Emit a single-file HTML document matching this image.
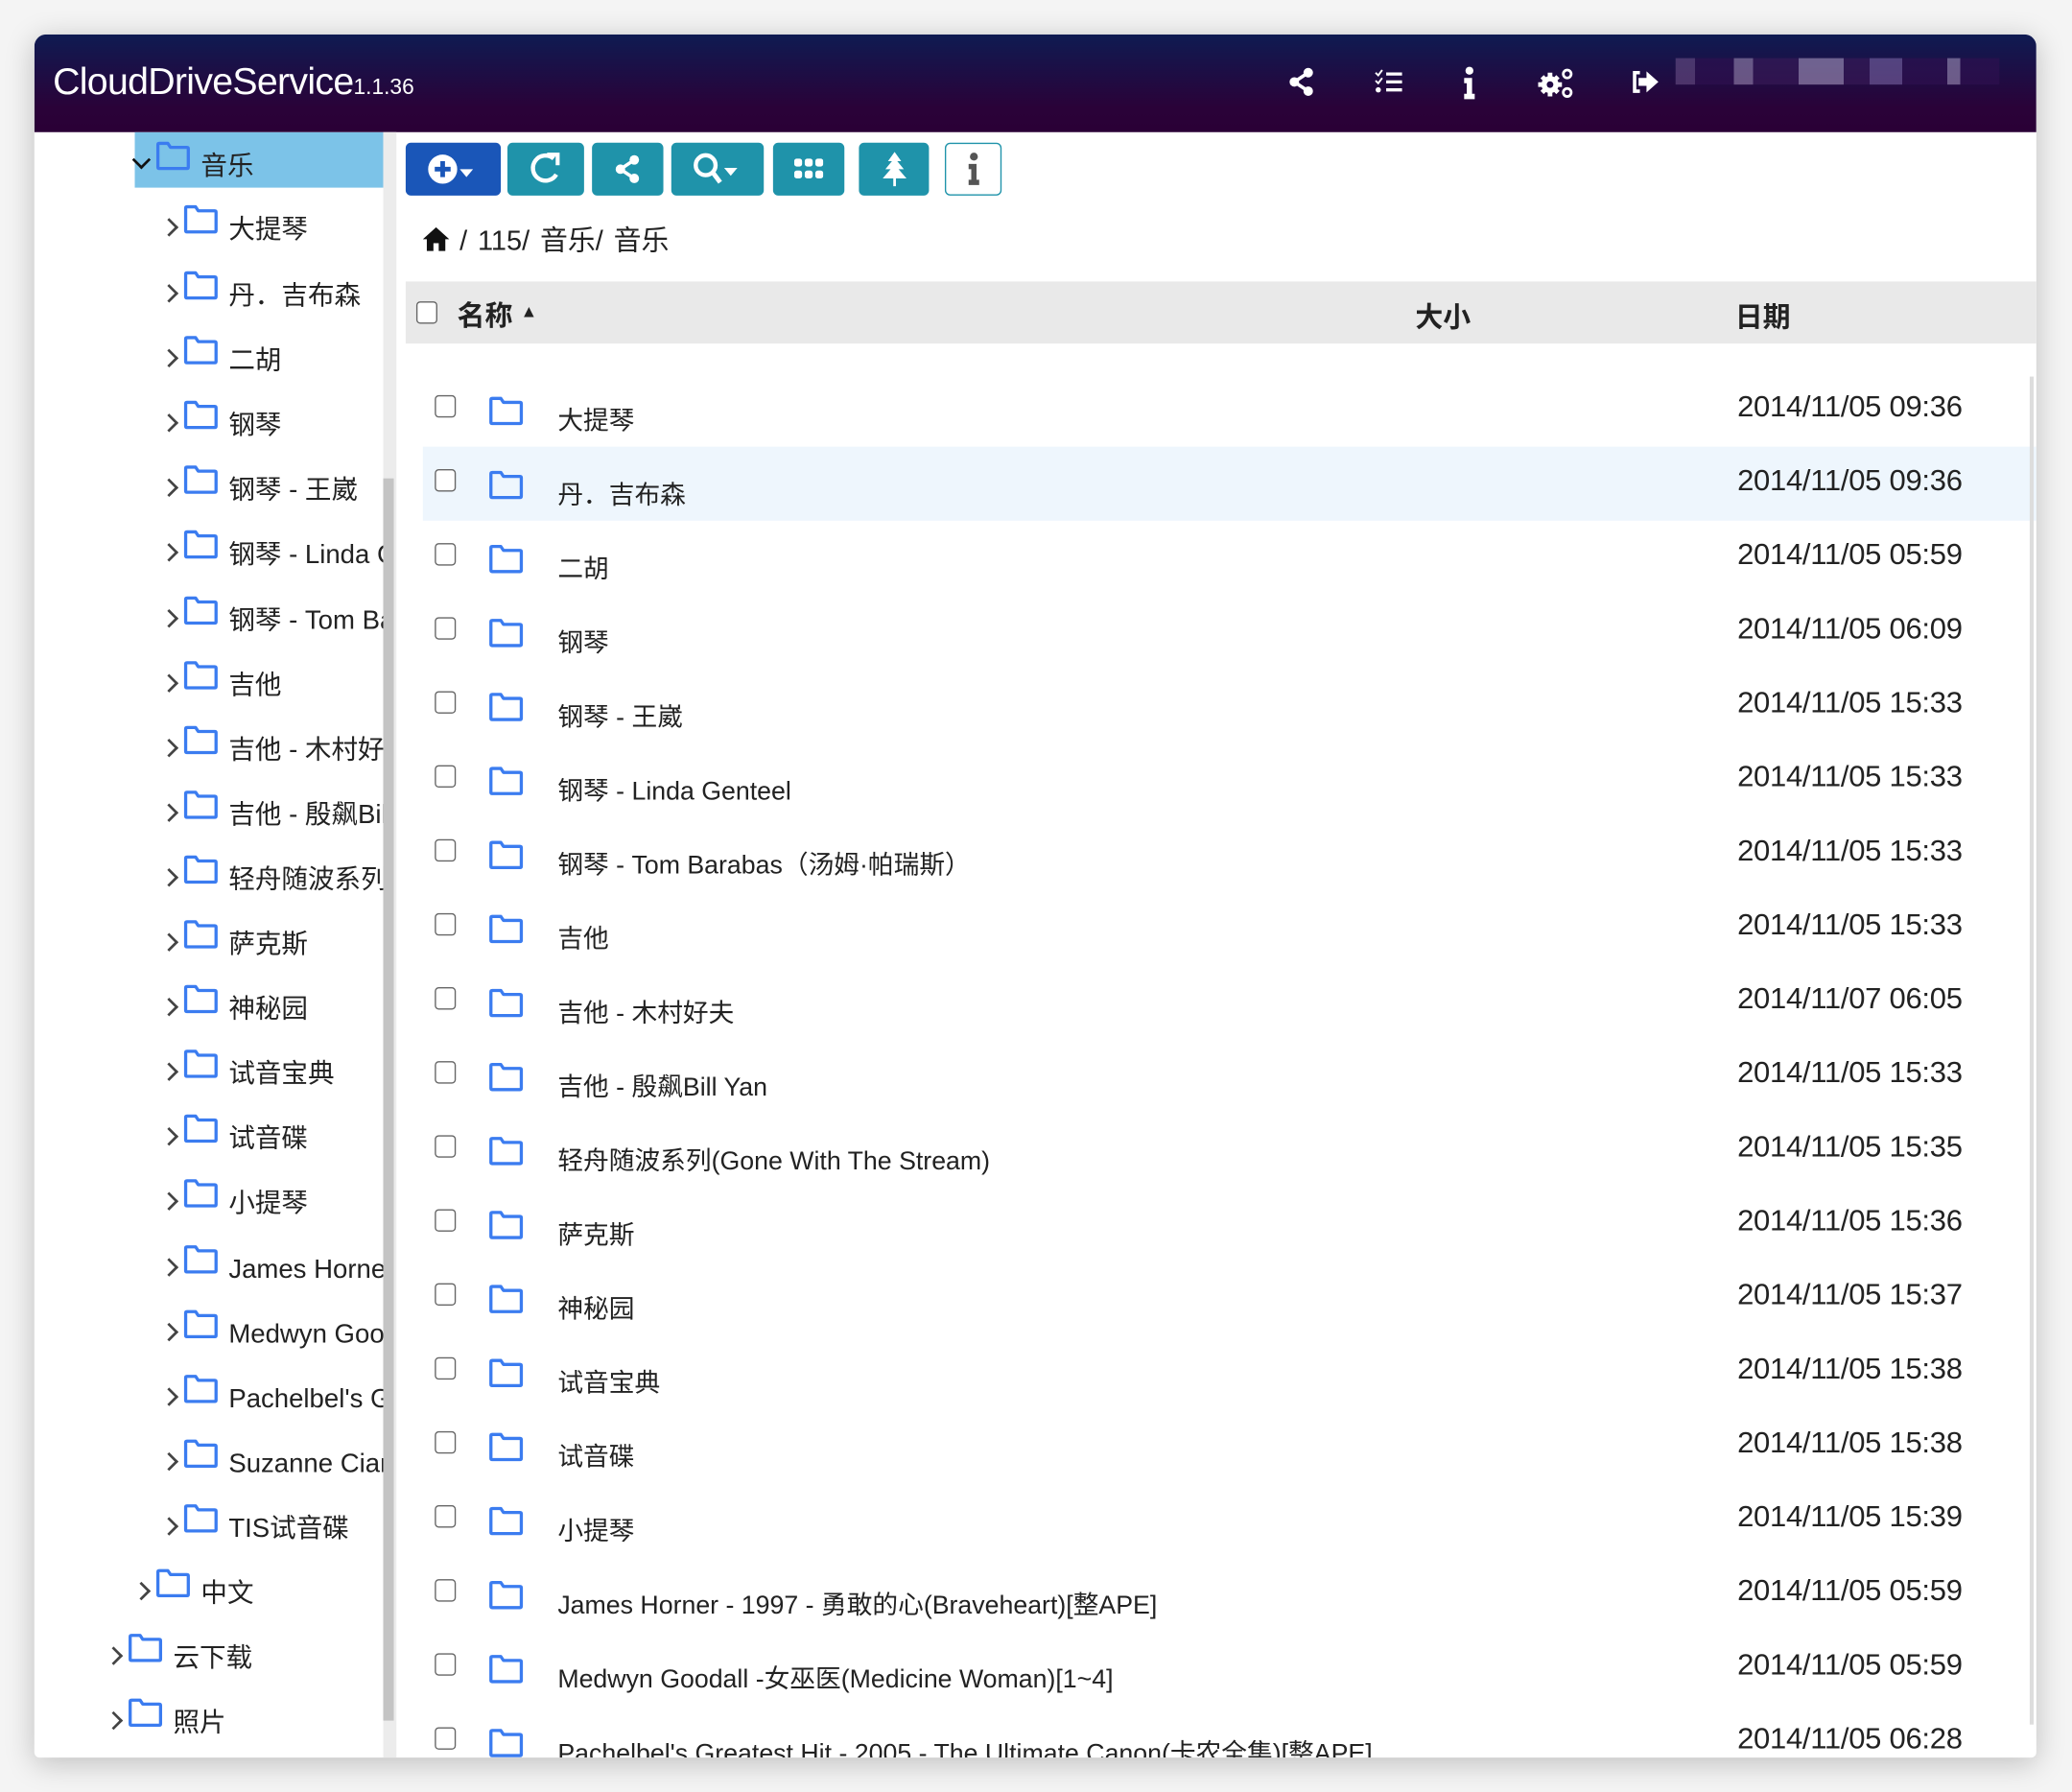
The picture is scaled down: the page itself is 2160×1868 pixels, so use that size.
<!DOCTYPE html>
<html><head><meta charset="utf-8"><style>
html,body{margin:0;padding:0;width:2160px;height:1868px;overflow:hidden;background:#f4f4f4}
#stage{position:absolute;left:0;top:0;width:1568px;height:1356px;transform:scale(1.377551);transform-origin:0 0;font-family:"Liberation Sans","Noto Sans CJK SC",sans-serif;color:#222}
.win{position:absolute;left:26px;top:26px;width:1515px;height:1304px;background:#fff;border-radius:9px 9px 4px 4px;box-shadow:0 4px 22px rgba(0,0,0,.22);overflow:hidden}
.hdr{position:absolute;left:0;top:0;width:1515px;height:74px;background:linear-gradient(#0f1b52,#2a0238 75%,#2a0036)}
.title{position:absolute;left:14px;top:20px;color:#fff;font-size:28.5px;letter-spacing:-0.5px}
.title small{font-size:16.5px;letter-spacing:0}
.hi{position:absolute;top:24px}
.blur{position:absolute;left:1242px;top:18px;width:245px;height:20px;background:linear-gradient(90deg,#6a4f86 0 6%,#2f1050 6% 18%,#9a86b0 18% 24%,#3a1a58 24% 38%,#a898c0 38% 52%,#3a1a58 52% 60%,#7a64a4 60% 70%,#2f1050 70% 84%,#a090b8 84% 88%,#2f1050 88%);opacity:.6}
.side{position:absolute;left:0;top:74px;width:264px;height:1230px;overflow:hidden}
.sb{position:absolute;left:264px;top:74px;width:10px;height:1230px;background:#ececec}
.sbt{position:absolute;left:264px;top:336px;width:8px;height:940px;background:#c4c4c4}
.ti{position:absolute;height:40px;line-height:40px;font-size:20px;white-space:nowrap}
.ti .ch{display:inline-block;width:8px;height:8px;border-right:2px solid #444;border-bottom:2px solid #444;transform:rotate(-45deg);margin-right:6px;vertical-align:middle;position:relative;top:-3px}
.ti .fd{display:inline-block;vertical-align:middle;position:relative;top:-4px;margin-right:8px}
.sel{position:absolute;left:76px;top:0;width:188px;height:42px;background:#7cc3e8}
.main{position:absolute;left:274px;top:74px;width:1241px;height:1230px;overflow:hidden}
.btn{position:absolute;top:8px;height:40px;border-radius:4px;background:#1f93aa;display:flex;align-items:center;justify-content:center}
.bc{position:absolute;left:20px;top:66px;font-size:21px;word-spacing:2px}
.th{position:absolute;left:7px;top:113px;width:1234px;height:47px;background:#e9e9e9;font-size:21px;font-weight:bold}
.cb{position:absolute;width:14px;height:15px;border:1.5px solid #666;border-radius:3px;background:#fff}
.row{position:absolute;left:20px;width:1221px;height:56px}
.row .nm{position:absolute;left:102px;top:20px;font-size:19.4px;white-space:nowrap}
.row .dt{position:absolute;right:56px;top:13px;font-size:22.5px;letter-spacing:-0.2px}
.row .fi{position:absolute;left:50px;top:18px}
.row .cb{left:9px;top:17px}
.vs{position:absolute;left:1236px;top:185px;width:3px;height:1020px;background:#ddd}
</style></head><body><div id="stage">
<div class="win">
<div class="hdr">
<div class="title">CloudDriveService<small>1.1.36</small></div>
<svg class="hi" style="left:949px" width="20" height="24" viewBox="0 0 20 24"><g fill="#fff"><circle cx="15" cy="5" r="3.6"/><circle cx="4.5" cy="12" r="3.6"/><circle cx="15" cy="19" r="3.6"/></g><path d="M15 5L4.5 12L15 19" stroke="#fff" stroke-width="2.6" fill="none"/></svg>
<svg class="hi" style="left:1014px" width="22" height="24" viewBox="0 0 22 24"><g stroke="#fff" stroke-width="2.4" fill="none"><path d="M9 6H21M9 12H21M9 18H21"/><path d="M1 5l2 2 3-4M1 11l2 2 3-4" stroke-width="1.4"/></g><circle cx="3" cy="18" r="2" fill="#fff"/></svg>
<svg class="hi" style="left:1080px" width="12" height="26" viewBox="0 0 12 26"><g fill="#fff"><circle cx="6" cy="3.5" r="3"/><path d="M2 9H8V21H10V25H2V21H4V13H2Z"/></g></svg>
<svg class="hi" style="left:1138px" width="28" height="26" viewBox="0 0 28 26"><g fill="#fff"><circle cx="9" cy="14" r="6.5"/><g stroke="#fff" stroke-width="3.5"><path d="M9 5V23M0 14H18M3 8L15 20M15 8L3 20"/></g><circle cx="9" cy="14" r="2.5" fill="#200844"/></g><g fill="none" stroke="#fff" stroke-width="2"><circle cx="22" cy="6" r="3"/><circle cx="22" cy="20" r="3"/></g></svg>
<svg class="hi" style="left:1208px" width="22" height="24" viewBox="0 0 22 24"><path d="M7 5H3V19H7" stroke="#fff" stroke-width="2.6" fill="none"/><path d="M6 9H12V4L21 12L12 20V15H6Z" fill="#fff"/></svg>
<div class="blur"></div>
</div>
<div class="side">
<div class="sel"></div>
<div id="tree"></div>
</div>
<div class="sb"></div><div class="sbt"></div>
<div class="main">
<div class="btn" style="left:7px;width:72px;background:#1a56b8"><svg width="40" height="26" viewBox="0 0 40 26"><circle cx="12" cy="13" r="11" fill="#fff"/><path d="M12 7V19M6 13H18" stroke="#1a56b8" stroke-width="3.5"/><path d="M25 13H35L30 19Z" fill="#fff"/></svg></div>
<div class="btn" style="left:84px;width:58px"><svg width="26" height="28" viewBox="0 0 26 28"><path d="M19 6A9.5 9.5 0 1 0 21 18" stroke="#fff" stroke-width="3.2" fill="none"/><path d="M14 3H22V11" stroke="#fff" stroke-width="3" fill="none"/></svg></div>
<div class="btn" style="left:148px;width:54px"><svg width="20" height="24" viewBox="0 0 20 24"><g fill="#fff"><circle cx="15" cy="5" r="3.6"/><circle cx="4.5" cy="12" r="3.6"/><circle cx="15" cy="19" r="3.6"/></g><path d="M15 5L4.5 12L15 19" stroke="#fff" stroke-width="2.6" fill="none"/></svg></div>
<div class="btn" style="left:208px;width:70px"><svg width="40" height="28" viewBox="0 0 40 28"><circle cx="11" cy="11" r="7.5" stroke="#fff" stroke-width="3.2" fill="none"/><path d="M16 16L22 24" stroke="#fff" stroke-width="3.5"/><path d="M25 13H35L30 19Z" fill="#fff"/></svg></div>
<div class="btn" style="left:285px;width:54px"><svg width="22" height="16" viewBox="0 0 22 16"><g fill="#fff"><rect x="0" y="0" width="6" height="6" rx="2"/><rect x="8" y="0" width="6" height="6" rx="2"/><rect x="16" y="0" width="6" height="6" rx="2"/><rect x="0" y="9" width="6" height="6" rx="2"/><rect x="8" y="9" width="6" height="6" rx="2"/><rect x="16" y="9" width="6" height="6" rx="2"/></g></svg></div>
<div class="btn" style="left:350px;width:53px"><svg width="18" height="26" viewBox="0 0 18 26"><path d="M9 0L14 7H11L16 13H12L18 20H10V26H8V20H0L6 13H2L7 7H4Z" fill="#fff"/></svg></div>
<div class="btn" style="left:415px;width:41px;background:#fff;border:1.5px solid #1f93aa;height:38px"><svg width="12" height="26" viewBox="0 0 12 26"><g fill="#555"><circle cx="6" cy="3.5" r="3"/><path d="M2 9H8V21H10V25H2V21H4V13H2Z"/></g></svg></div>
<div class="bc"><svg width="20" height="18" viewBox="0 0 20 18" style="vertical-align:-1px"><path d="M10 0L20 9H17V18H12V12H8V18H3V9H0Z" fill="#111"/></svg> / 115/ 音乐/ 音乐</div>
<div class="th"><div class="cb" style="left:8px;top:15px"></div><span style="position:absolute;left:39px;top:10px">名称 <span style="font-size:13px;position:relative;top:-6px">▲</span></span><span style="position:absolute;left:764px;top:11px">大小</span><span style="position:absolute;left:1006px;top:11px">日期</span></div>
<div id="rows"></div>
<div class="vs"></div>
</div>
</div>
</div>
<script>
var fold='<svg width="26" height="22" viewBox="0 0 26 22"><path d="M1.5 2.5Q1.5 1.5 2.5 1.5H9L11 4.5H23.5Q24.5 4.5 24.5 5.5V19.5Q24.5 20.5 23.5 20.5H2.5Q1.5 20.5 1.5 19.5Z" fill="none" stroke="#3b7cf0" stroke-width="2.4" stroke-linejoin="round"/></svg>';
var t=[["音乐",76,0,1],["大提琴",97,1],["丹．吉布森",97,1],["二胡",97,1],["钢琴",97,1],["钢琴 - 王崴",97,1],["钢琴 - Linda Genteel",97,1],["钢琴 - Tom Barabas",97,1],["吉他",97,1],["吉他 - 木村好夫",97,1],["吉他 - 殷飙Bill Yan",97,1],["轻舟随波系列",97,1],["萨克斯",97,1],["神秘园",97,1],["试音宝典",97,1],["试音碟",97,1],["小提琴",97,1],["James Horner",97,1],["Medwyn Goodall",97,1],["Pachelbel's Greatest",97,1],["Suzanne Ciani",97,1],["TIS试音碟",97,1],["中文",76,1],["云下载",55,1],["照片",55,1]];
var h='';
var ys=[4,52,102,151,200,249,298,348,397,446,495,544,593,642,691,740,789,839,888,937,986,1035,1084,1133,1182];
t.forEach(function(e,i){
 var ch=e[3]?'<span class="ch" style="transform:rotate(45deg);top:-6px;border-color:#111"></span>':'<span class="ch"></span>';
 h+='<div class="ti" style="left:'+e[1]+'px;top:'+(ys[i]+2)+'px">'+ch+'<span class="fd">'+fold+'</span>'+e[0]+'</div>';
});
document.getElementById('tree').innerHTML=h;
var r=[["大提琴","2014/11/05 09:36"],["丹．吉布森","2014/11/05 09:36"],["二胡","2014/11/05 05:59"],["钢琴","2014/11/05 06:09"],["钢琴 - 王崴","2014/11/05 15:33"],["钢琴 - Linda Genteel","2014/11/05 15:33"],["钢琴 - Tom Barabas（汤姆·帕瑞斯）","2014/11/05 15:33"],["吉他","2014/11/05 15:33"],["吉他 - 木村好夫","2014/11/07 06:05"],["吉他 - 殷飙Bill Yan","2014/11/05 15:33"],["轻舟随波系列(Gone With The Stream)","2014/11/05 15:35"],["萨克斯","2014/11/05 15:36"],["神秘园","2014/11/05 15:37"],["试音宝典","2014/11/05 15:38"],["试音碟","2014/11/05 15:38"],["小提琴","2014/11/05 15:39"],["James Horner - 1997 - 勇敢的心(Braveheart)[整APE]","2014/11/05 05:59"],["Medwyn Goodall -女巫医(Medicine Woman)[1~4]","2014/11/05 05:59"],["Pachelbel's Greatest Hit - 2005 - The Ultimate Canon(卡农全集)[整APE]","2014/11/05 06:28"]];
h='';
r.forEach(function(e,i){
 h+='<div class="row" style="top:'+(182+i*56)+'px;'+(i==1?'background:#eef6fd':'')+'"><div class="cb"></div><div class="fi">'+fold+'</div><div class="nm">'+e[0]+'</div><div class="dt">'+e[1]+'</div></div>';
});
document.getElementById('rows').innerHTML=h;
</script>
</body></html>
